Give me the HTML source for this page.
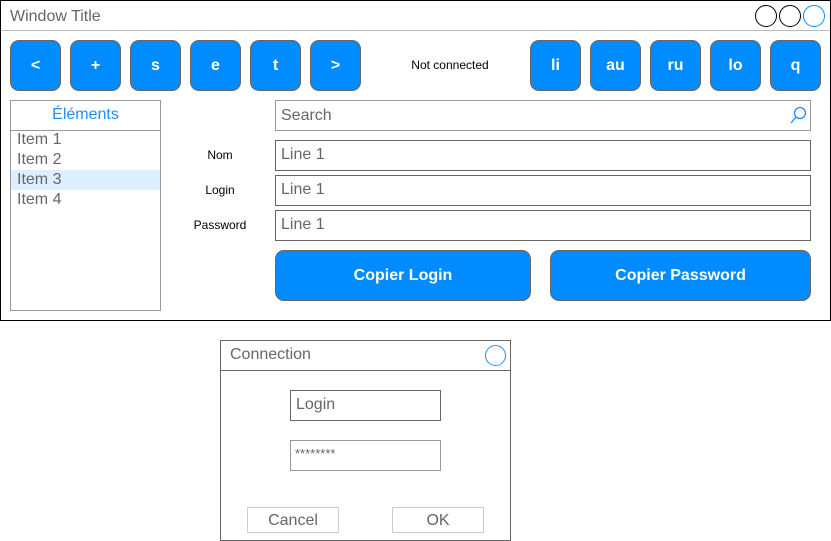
<!DOCTYPE html>
<html><head><style>
*{box-sizing:border-box;margin:0;padding:0}
body{width:831px;height:541px;background:#fff;position:relative;font-family:"Liberation Sans",sans-serif;overflow:hidden}
.a{position:absolute}
.btn{position:absolute;top:40px;width:51px;height:51px;background:#008cff;border:1px solid #666;border-radius:9px;color:#fff;font-weight:bold;font-size:16px;display:flex;align-items:center;justify-content:center}
.circ{position:absolute;top:5px;width:22px;height:22px;border-radius:50%;border:1px solid #000}
.inp{position:absolute;left:275px;width:536px;height:31px;border:1px solid #666;color:#666;font-size:16px;padding:5px 5px}
.lab{position:absolute;font-size:12px;color:#000;width:80px;text-align:center;left:180px}
.big{position:absolute;top:250px;height:51px;background:#008cff;border:1px solid #666;border-radius:9px;color:#fff;font-weight:bold;font-size:16px;display:flex;align-items:center;justify-content:center}
.it{position:absolute;left:11px;width:149px;height:20px;font-size:16px;color:#666;padding-left:6px;line-height:19px}
</style></head><body>
<div class="a" style="left:0;top:0;width:831px;height:321px;border:1px solid #000"></div>
<div class="a" style="left:1px;top:30px;width:829px;height:1px;background:#bbb"></div>
<div class="a" style="left:10px;top:8px;font-size:16px;color:#666">Window Title</div>
<div class="circ" style="left:755px"></div><div class="circ" style="left:779px"></div><div class="circ" style="left:803px;border-color:#008cff"></div>
<div class="btn" style="left:10px">&lt;</div><div class="btn" style="left:70px">+</div><div class="btn" style="left:130px">s</div><div class="btn" style="left:190px">e</div><div class="btn" style="left:250px">t</div><div class="btn" style="left:310px">&gt;</div>
<div class="a" style="left:390px;top:58px;width:120px;text-align:center;font-size:12px">Not connected</div>
<div class="btn" style="left:530px">li</div><div class="btn" style="left:590px">au</div><div class="btn" style="left:650px">ru</div><div class="btn" style="left:710px">lo</div><div class="btn" style="left:770px">q</div>
<div class="a" style="left:10px;top:100px;width:151px;height:211px;border:1px solid #999"></div>
<div class="a" style="left:10px;top:100px;width:151px;height:31px;border:1px solid #999;color:#1e90ff;font-size:16px;text-align:center;line-height:28px">Éléments</div>
<div class="it" style="top:130px">Item 1</div><div class="it" style="top:150px">Item 2</div><div class="it" style="top:170px;background:#ddeeff">Item 3</div><div class="it" style="top:190px">Item 4</div>
<div class="inp" style="top:100px;border-color:#999;padding-top:6px">Search</div>
<svg class="a" style="left:789px;top:105px" width="20" height="20"><circle cx="11" cy="8" r="5.5" fill="none" stroke="#1e90ff" stroke-width="1.3"/><line x1="7" y1="12" x2="2" y2="18" stroke="#1e90ff" stroke-width="1.3"/></svg>
<div class="lab" style="top:148px">Nom</div><div class="inp" style="top:140px">Line 1</div>
<div class="lab" style="top:183px">Login</div><div class="inp" style="top:175px">Line 1</div>
<div class="lab" style="top:218px">Password</div><div class="inp" style="top:210px">Line 1</div>
<div class="big" style="left:275px;width:256px">Copier Login</div>
<div class="big" style="left:550px;width:261px">Copier Password</div>

<div class="a" style="left:220px;top:340px;width:291px;height:201px;border:1px solid #666"></div>
<div class="a" style="left:221px;top:370px;width:289px;height:1px;background:#666"></div>
<div class="a" style="left:230px;top:346px;font-size:16px;color:#666">Connection</div>
<div class="circ" style="left:485px;top:345px;width:21px;height:21px;border-color:#1e90ff"></div>
<div class="a" style="left:290px;top:390px;width:151px;height:31px;border:1px solid #666;font-size:16px;color:#666;padding:5px 5px">Login</div>
<div class="a" style="left:290px;top:440px;width:151px;height:31px;border:1px solid #999;font-size:13px;color:#666;padding:5px 4px">********</div>
<div class="a" style="left:247px;top:507px;width:92px;height:26px;border:1px solid #ccc;font-size:16px;color:#666;text-align:center;line-height:26px">Cancel</div>
<div class="a" style="left:392px;top:507px;width:92px;height:26px;border:1px solid #ccc;font-size:16px;color:#666;text-align:center;line-height:26px">OK</div>
</body></html>
